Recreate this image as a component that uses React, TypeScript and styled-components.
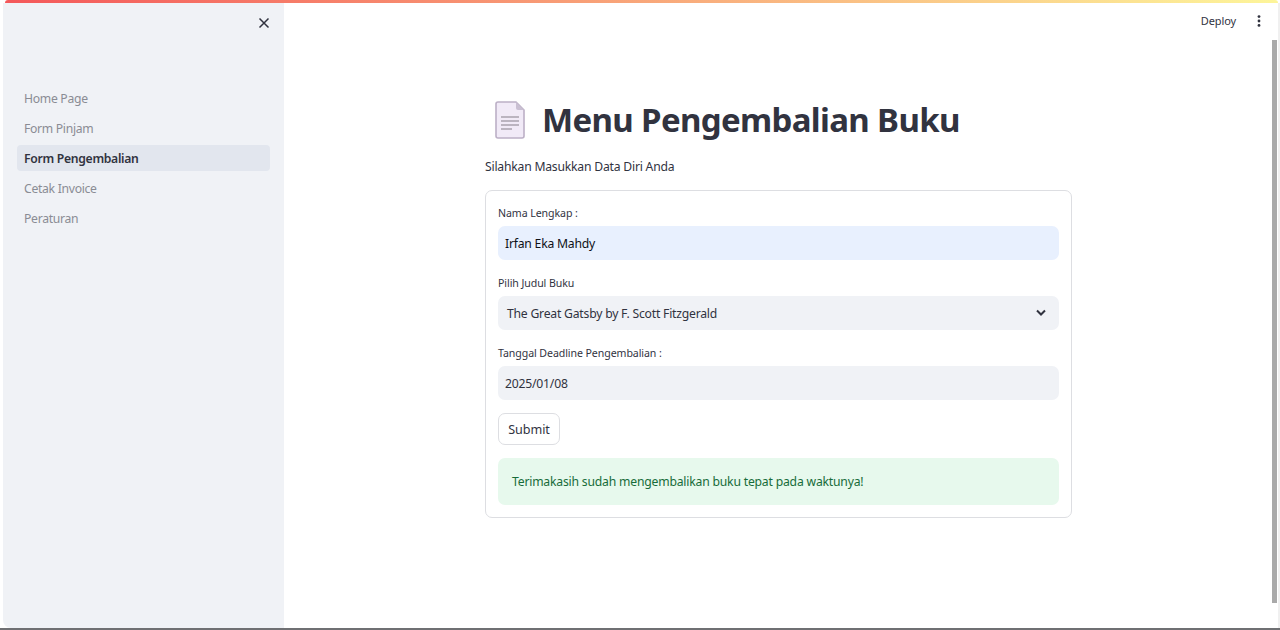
import styled, { createGlobalStyle } from "styled-components";

const GlobalStyle = createGlobalStyle`
  html, body {
    margin: 0;
    height: 100%;
    overflow: hidden;
    background: #ffffff;
    font-family: "Noto Sans", "Open Sans", sans-serif;
  }
  * { box-sizing: border-box; }
`;

const Page = styled.div`
  position: relative;
  width: 1280px;
  height: 630px;
  display: flex;
  flex-direction: column;
  background: #ffffff;
`;

const Decoration = styled.div`
  height: 3px;
  flex: none;
  margin: 0 2px 0 5px;
  border-radius: 3px 3px 0 0;
  background: linear-gradient(90deg, #f4585a, #fdf59a);
`;

const Body = styled.div`
  flex: 1;
  min-height: 0;
  display: flex;
  padding-left: 3px;
`;

const Sidebar = styled.aside`
  width: 281px;
  flex: none;
  display: flex;
  flex-direction: column;
  background: #f0f2f6;
  border-radius: 0 0 0 8px;
  padding: 10px 10px 0 14px;
`;

const CloseRow = styled.div`
  height: 20px;
  display: flex;
  justify-content: flex-end;
  margin-bottom: 52px;
  color: #31333f;
`;

const Nav = styled.nav`
  display: flex;
  flex-direction: column;
  gap: 4px;
  margin-right: 4px;
`;

const NavItem = styled.a<{ $active?: boolean }>`
  height: 26px;
  display: flex;
  align-items: center;
  padding-left: 7px;
  border-radius: 4px;
  font-size: 12.2px;
  letter-spacing: -0.3px;
  font-weight: ${(p) => (p.$active ? 600 : 400)};
  color: ${(p) => (p.$active ? "#31333f" : "#8a8c94")};
  background: ${(p) => (p.$active ? "#e2e6ee" : "transparent")};
`;

const Main = styled.main`
  flex: 1;
  min-width: 0;
  display: flex;
  flex-direction: column;
  padding-left: 201px;
`;

const Toolbar = styled.div`
  position: absolute;
  top: 13px;
  right: 19px;
  display: flex;
  align-items: center;
  gap: 21px;
  color: #31333f;
  font-size: 11px;
  letter-spacing: -0.1px;
`;

const Content = styled.div`
  width: 587px;
  padding-top: 92px;
`;

const TitleRow = styled.div`
  height: 50px;
  display: flex;
  align-items: center;
  gap: 17px;
  padding-left: 10px;
`;

const Title = styled.h1`
  margin: -2px 0 0;
  font-size: 33px;
  font-weight: 700;
  color: #31333f;
  white-space: nowrap;
  letter-spacing: -0.65px;
`;

const Subtitle = styled.p`
  margin: 12px 0 13px;
  height: 20px;
  line-height: 20px;
  font-size: 12.2px;
  letter-spacing: -0.22px;
  color: #31333f;
`;

const Form = styled.form`
  height: 328px;
  border: 1px solid #dddee2;
  border-radius: 7px;
  padding: 12px 12px 0;
  display: flex;
  flex-direction: column;
`;

const Field = styled.div`
  display: flex;
  flex-direction: column;
  margin-bottom: 13px;
`;

const Label = styled.label`
  height: 20px;
  margin-bottom: 3px;
  line-height: 20px;
  font-size: 10.6px;
  letter-spacing: -0.08px;
  color: #31333f;
`;

const Control = styled.div<{ $filled?: boolean }>`
  height: 34px;
  display: flex;
  align-items: center;
  justify-content: space-between;
  padding: 0 12px 0 7px;
  border-radius: 7px;
  font-size: 12.2px;
  letter-spacing: -0.22px;
  color: ${(p) => (p.$filled ? "#0e1117" : "#31333f")};
  background: ${(p) => (p.$filled ? "#e8f0fe" : "#f0f2f6")};
`;

const SelectValue = styled.span`
  padding-left: 2px;
`;

const SubmitButton = styled.button`
  width: 62px;
  height: 32px;
  padding: 0;
  background: #ffffff;
  border: 1px solid #dddee2;
  border-radius: 7px;
  font-family: inherit;
  font-size: 12.6px;
  letter-spacing: -0.05px;
  color: #31333f;
`;

const Alert = styled.div`
  height: 47px;
  margin-top: 13px;
  display: flex;
  align-items: center;
  padding-left: 14px;
  border-radius: 7px;
  background: #e7f9ed;
  color: #176c3a;
  font-size: 12.2px;
  letter-spacing: -0.2px;
`;

const Scrollbar = styled.div`
  position: absolute;
  top: 40px;
  right: 3px;
  width: 5px;
  height: 563px;
  background: #a9a9a9;
`;

const RightEdge = styled.div`
  position: absolute;
  top: 3px;
  right: 0;
  bottom: 2px;
  width: 2px;
  background: #f0f0f0;
`;

const BottomEdge = styled.div`
  height: 2px;
  flex: none;
  background: #6f7073;
`;

const pages = ["Home Page", "Form Pinjam", "Form Pengembalian", "Cetak Invoice", "Peraturan"];

const CloseIcon = () => (
  <svg width="20" height="20" viewBox="0 0 20 20" fill="none" stroke="#31333f" strokeWidth="1.5">
    <path d="M5.5 5.5l9 9M14.5 5.5l-9 9" />
  </svg>
);

const MoreIcon = () => (
  <svg width="4" height="12" viewBox="0 0 4 12" fill="#31333f">
    <circle cx="2" cy="1.6" r="1.4" />
    <circle cx="2" cy="6" r="1.4" />
    <circle cx="2" cy="10.4" r="1.4" />
  </svg>
);

const ChevronIcon = () => (
  <svg width="12" height="8" viewBox="0 0 12 8" fill="none" stroke="#31333f" strokeWidth="2">
    <path d="M2 1.5l4 4 4-4" />
  </svg>
);

const PageIcon = () => (
  <svg width="30" height="38" viewBox="0 0 30 38">
    <path d="M3 1h18l8 8v26a2 2 0 0 1-2 2H3a2 2 0 0 1-2-2V3a2 2 0 0 1 2-2z" fill="#f1eaf7" stroke="#bcb0c6" strokeWidth="1.6" />
    <path d="M21 1l8 8h-6a2 2 0 0 1-2-2z" fill="#c9bfd2" />
    <path d="M6 16h18M6 20h18M6 24h18M6 28h11" stroke="#a9a3ae" strokeWidth="1.3" />
  </svg>
);

export default function App() {
  return (
    <Page>
      <GlobalStyle />
      <Decoration />
      <Body>
        <Sidebar>
          <CloseRow>
            <CloseIcon />
          </CloseRow>
          <Nav>
            {pages.map((name) => (
              <NavItem key={name} $active={name === "Form Pengembalian"}>
                {name}
              </NavItem>
            ))}
          </Nav>
        </Sidebar>
        <Main>
          <Content>
            <TitleRow>
              <PageIcon />
              <Title>Menu Pengembalian Buku</Title>
            </TitleRow>
            <Subtitle>Silahkan Masukkan Data Diri Anda</Subtitle>
            <Form>
              <Field>
                <Label>Nama Lengkap :</Label>
                <Control $filled>Irfan Eka Mahdy</Control>
              </Field>
              <Field>
                <Label>Pilih Judul Buku</Label>
                <Control>
                  <SelectValue>The Great Gatsby by F. Scott Fitzgerald</SelectValue>
                  <ChevronIcon />
                </Control>
              </Field>
              <Field>
                <Label>Tanggal Deadline Pengembalian :</Label>
                <Control>2025/01/08</Control>
              </Field>
              <SubmitButton type="button">Submit</SubmitButton>
              <Alert>Terimakasih sudah mengembalikan buku tepat pada waktunya!</Alert>
            </Form>
          </Content>
        </Main>
      </Body>
      <BottomEdge />
      <Toolbar>
        <span>Deploy</span>
        <MoreIcon />
      </Toolbar>
      <Scrollbar />
      <RightEdge />
    </Page>
  );
}
